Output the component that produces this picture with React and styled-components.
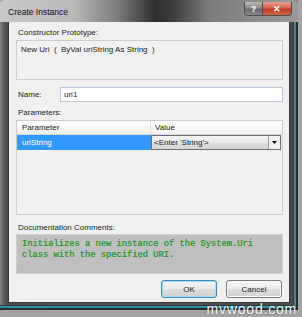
import React from 'react';
import styled, { createGlobalStyle } from 'styled-components';

const GlobalStyle = createGlobalStyle`
  html, body {
    margin: 0;
    padding: 0;
    background: #a3a3a3;
    width: 302px;
    height: 317px;
    overflow: hidden;
  }
  body {
    font-family: "Liberation Sans", Arial, sans-serif;
  }
`;

const Window = styled.div`
  position: relative;
  width: 298px;
  height: 310px;
  box-sizing: border-box;
  display: flex;
  flex-direction: column;
  padding: 0 8px 7px 8px;
  background: linear-gradient(90deg, #8a8a8a 0px, #606060 3px, #4c4c4c 7px, #505050 50%, #4a4a4a 100%);
  box-shadow: inset -2px -2px 0 #2c2c2c, inset -4px -4px 0 #2793a9, inset -5px -5px 0 #3a3a3a;
  border-radius: 4px 4px 0 0;
`;

const TitleBar = styled.div`
  height: 22px;
  margin: 0 -8px;
  padding: 0 6px 0 8px;
  display: flex;
  align-items: flex-start;
  justify-content: space-between;
  background: linear-gradient(90deg, #c8c8c8 0%, #b8b8b8 25%, #7a7a7a 40%, #2e2e2e 52%, #3c3c3c 58%, #7a7a7a 70%, #8c8c8c 85%, #9a9a9a 100%);
  border-radius: 4px 4px 0 0;
`;

const TitleText = styled.span`
  margin-top: 7px;
  font-size: 8.5px;
  color: #111;
`;

const Caption = styled.div`
  display: flex;
  margin-top: 2px;
  border: 1px solid #4a4a4a;
  border-top: none;
  border-radius: 0 0 4px 4px;
  overflow: hidden;
`;

const CaptionButton = styled.div`
  width: ${p => p.$w}px;
  height: 13px;
  display: flex;
  align-items: center;
  justify-content: center;
  font-size: 9px;
  font-weight: bold;
  color: #fff;
  background: ${p => p.$close
    ? 'linear-gradient(180deg, #e6a08e 0%, #d2614c 45%, #b83b22 55%, #cf6a4e 100%)'
    : 'linear-gradient(180deg, #bcbcbc 0%, #8a8a8a 45%, #6a6a6a 55%, #8c8c8c 100%)'};
  border-left: ${p => p.$close ? '1px solid #4a4a4a' : 'none'};
`;

const Client = styled.div`
  flex: 1;
  display: flex;
  flex-direction: column;
  padding: 5px 6px 0 7px;
  background: #f0f0f0;
  border: 1px solid #3a3a3a;
  border-top: none;
  font-size: 8px;
  color: #1a1a1a;
`;

const Label = styled.div`
  height: 11px;
  line-height: 11px;
  padding-left: 2px;
  margin-top: ${p => p.$top || 0}px;
`;

const ProtoBox = styled.div`
  margin-top: 2px;
  height: 40px;
  box-sizing: border-box;
  border: 1px solid #cdcdcd;
  background: #f1f1f1;
  padding: 3px 4px;
  line-height: 11px;
`;

const NameRow = styled.div`
  margin-top: 7px;
  display: flex;
  align-items: center;
`;

const NameLabel = styled.span`
  width: 42px;
  padding-left: 2px;
`;

const TextInput = styled.div`
  flex: 1;
  height: 15px;
  box-sizing: border-box;
  border: 1px solid #b8c7d8;
  background: #fff;
  padding-left: 3px;
  line-height: 13px;
`;

const Grid = styled.div`
  margin-top: 2px;
  height: 95px;
  box-sizing: border-box;
  border: 1px solid #cfcfcf;
  background: #f0f0f0;
  display: grid;
  grid-template-columns: 134px 1fr;
  grid-template-rows: 14px 15px;
  align-content: start;
`;

const HeaderCell = styled.div`
  background: linear-gradient(180deg, #ffffff 0%, #f7f7f7 60%, #efefef 100%);
  border-bottom: 1px solid #d6d6d6;
  border-right: ${p => p.$last ? 'none' : '1px solid #e0e0e0'};
  padding-left: ${p => p.$last ? 4 : 5}px;
  line-height: 13px;
`;

const NameCell = styled.div`
  background: #3399ff;
  color: #fff;
  padding-left: 5px;
  line-height: 15px;
`;

const ComboCell = styled.div`
  display: flex;
  margin-right: 1px;
  box-sizing: border-box;
  border: 1px solid #707070;
  background: linear-gradient(180deg, #f4f4f4 0%, #e9e9e9 50%, #dcdcdc 55%, #d6d6d6 100%);
`;

const ComboText = styled.span`
  flex: 1;
  padding-left: 2px;
  line-height: 13px;
`;

const ComboButton = styled.div`
  width: 11px;
  border-left: 1px solid #9a9a9a;
  background: #f0f0f0;
  display: flex;
  align-items: center;
  justify-content: center;
`;

const DocBox = styled.div`
  margin-top: 1px;
  height: 40px;
  box-sizing: border-box;
  border: 1px solid #cfcfcf;
  background: #bfbfbf;
  padding: 4px 5px;
  font-family: "Liberation Mono", "Courier New", monospace;
  font-size: 8.75px;
  line-height: 11px;
  color: #2f9a35;
  text-shadow: 0 0 0.4px #2f9a35;
  white-space: pre;
`;

const Buttons = styled.div`
  margin-top: 6px;
  display: flex;
  justify-content: flex-end;
  gap: 9px;
  padding-right: 1px;
`;

const Button = styled.div`
  width: 56px;
  height: 18px;
  box-sizing: border-box;
  border: 1px solid ${p => p.$default ? '#3c8ec0' : '#7a7a7a'};
  border-radius: 3px;
  background: linear-gradient(180deg, #f4f4f4 0%, #ececec 48%, #dddddd 52%, #d1d1d1 100%);
  box-shadow: ${p => p.$default ? 'inset 0 0 0 1px #a8dcf4' : 'inset 0 0 0 1px #fbfbfb'};
  display: flex;
  align-items: center;
  justify-content: center;
  font-size: 8px;
  color: #1a1a1a;
`;

const Watermark = styled.span`
  position: absolute;
  right: 5px;
  bottom: 0px;
  font-family: "Liberation Sans", Arial, sans-serif;
  font-size: 14px;
  letter-spacing: 0.8px;
  color: #f2f2f2;
  text-shadow: 0 0 2px rgba(0, 0, 0, 0.4);
`;

const Page = styled.div`
  position: relative;
  width: 302px;
  height: 317px;
`;

const App = () => (
  <Page>
    <GlobalStyle />
    <Window>
      <TitleBar>
        <TitleText>Create Instance</TitleText>
        <Caption>
          <CaptionButton $w={17}>?</CaptionButton>
          <CaptionButton $w={28} $close>✕</CaptionButton>
        </Caption>
      </TitleBar>
      <Client>
        <Label>Constructor Prototype:</Label>
        <ProtoBox>New Uri&nbsp; (&nbsp; ByVal uriString As String&nbsp; )</ProtoBox>
        <NameRow>
          <NameLabel>Name:</NameLabel>
          <TextInput>uri1</TextInput>
        </NameRow>
        <Label $top={5}>Parameters:</Label>
        <Grid>
          <HeaderCell>Parameter</HeaderCell>
          <HeaderCell $last>Value</HeaderCell>
          <NameCell>uriString</NameCell>
          <ComboCell>
            <ComboText>&lt;Enter 'String'&gt;</ComboText>
            <ComboButton>
              <svg width="5" height="3" viewBox="0 0 5 3">
                <path d="M0 0 H5 L2.5 3 Z" fill="#111" />
              </svg>
            </ComboButton>
          </ComboCell>
        </Grid>
        <Label $top={7}>Documentation Comments:</Label>
        <DocBox>{'Initializes a new instance of the System.Uri\nclass with the specified URI.'}</DocBox>
        <Buttons>
          <Button $default>OK</Button>
          <Button>Cancel</Button>
        </Buttons>
      </Client>
    </Window>
    <Watermark>mvwood.com</Watermark>
  </Page>
);

export default App;
